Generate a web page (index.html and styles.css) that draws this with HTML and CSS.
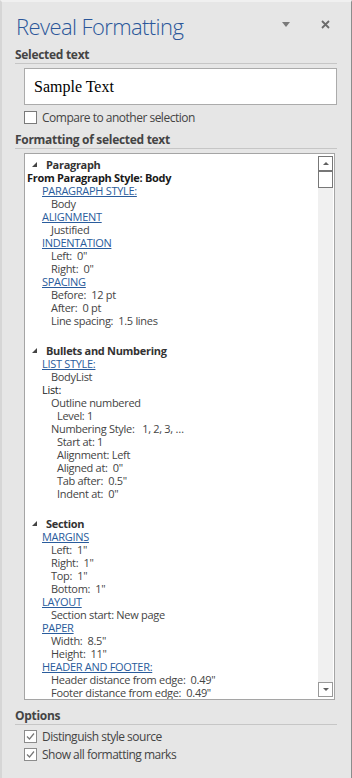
FILE: index.html
```html
<!DOCTYPE html>
<html lang="en">
<head>
  <meta charset="UTF-8" />
  <meta name="viewport" content="width=device-width, initial-scale=1.0"/>
  <title>Reveal Formatting</title>
  <link rel="stylesheet" href="styles.css">
</head>
<body>

  <div class="pane">

    <!-- Title bar -->
    <div class="pane-head">
      <h1>Reveal Formatting</h1>
      <span class="menu-arrow"></span>
      <svg class="close" width="9" height="9" viewBox="0 0 9 9">
        <path d="M1 1 L8 8 M8 1 L1 8" stroke="#6b6b6b" stroke-width="1.8" fill="none"/>
      </svg>
    </div>

    <!-- Selected text -->
    <h2 class="group-title">Selected text</h2>
    <div class="sample">Sample Text</div>
    <div class="check">
      <span class="box"></span>
      <span>Compare to another selection</span>
    </div>

    <!-- Formatting tree -->
    <h2 class="group-title second">Formatting of selected text</h2>
    <div class="tree">
      <div class="tree-body">
        <div class="sec-head"><span class="twisty"></span>Paragraph</div>
        <div class="lvl0 strong">From Paragraph Style: Body</div>
        <a class="lvl1 link">PARAGRAPH STYLE:</a>
        <div class="lvl2">Body</div>
        <a class="lvl1 link">ALIGNMENT</a>
        <div class="lvl2">Justified</div>
        <a class="lvl1 link">INDENTATION</a>
        <div class="lvl2">Left:&nbsp; 0"</div>
        <div class="lvl2">Right:&nbsp; 0"</div>
        <a class="lvl1 link">SPACING</a>
        <div class="lvl2">Before:&nbsp; 12 pt</div>
        <div class="lvl2">After:&nbsp; 0 pt</div>
        <div class="lvl2">Line spacing:&nbsp; 1.5 lines</div>

        <div class="sec-head gap"><span class="twisty"></span>Bullets and Numbering</div>
        <a class="lvl1 link">LIST STYLE:</a>
        <div class="lvl2">BodyList</div>
        <div class="lvl1 plain">List:</div>
        <div class="lvl2">Outline numbered</div>
        <div class="lvl3">Level: 1</div>
        <div class="lvl2">Numbering Style:&nbsp;&nbsp; 1, 2, 3, …</div>
        <div class="lvl3">Start at: 1</div>
        <div class="lvl3">Alignment: Left</div>
        <div class="lvl3">Aligned at:&nbsp; 0"</div>
        <div class="lvl3">Tab after:&nbsp; 0.5"</div>
        <div class="lvl3">Indent at:&nbsp; 0"</div>

        <div class="sec-head gap"><span class="twisty"></span>Section</div>
        <a class="lvl1 link">MARGINS</a>
        <div class="lvl2">Left:&nbsp; 1"</div>
        <div class="lvl2">Right:&nbsp; 1"</div>
        <div class="lvl2">Top:&nbsp; 1"</div>
        <div class="lvl2">Bottom:&nbsp; 1"</div>
        <a class="lvl1 link">LAYOUT</a>
        <div class="lvl2">Section start: New page</div>
        <a class="lvl1 link">PAPER</a>
        <div class="lvl2">Width:&nbsp; 8.5"</div>
        <div class="lvl2">Height:&nbsp; 11"</div>
        <a class="lvl1 link">HEADER AND FOOTER:</a>
        <div class="lvl2">Header distance from edge:&nbsp; 0.49"</div>
        <div class="lvl2">Footer distance from edge:&nbsp; 0.49"</div>
      </div>

      <div class="scrollbar">
        <span class="sb-btn up"></span>
        <span class="sb-thumb"></span>
        <span class="sb-track"></span>
        <span class="sb-btn down"></span>
      </div>
    </div>

    <!-- Options -->
    <h2 class="group-title third">Options</h2>
    <div class="check opt">
      <span class="box checked">
        <svg width="11" height="11" viewBox="0 0 11 11"><path d="M2 5.5 L4.5 8 L9 2.5" stroke="#777" stroke-width="1.2" fill="none"/></svg>
      </span>
      <span>Distinguish style source</span>
    </div>
    <div class="check opt">
      <span class="box checked">
        <svg width="11" height="11" viewBox="0 0 11 11"><path d="M2 5.5 L4.5 8 L9 2.5" stroke="#777" stroke-width="1.2" fill="none"/></svg>
      </span>
      <span>Show all formatting marks</span>
    </div>

  </div>

</body>
</html>
```

FILE: styles.css
```css
* {
  margin: 0;
  padding: 0;
  box-sizing: border-box;
}

body {
  font-family: 'Open Sans', 'Noto Sans', sans-serif;
  background: #e6e6e6;
  color: #444;
  width: 352px;
  height: 778px;
  overflow: hidden;
}

.pane {
  height: 778px;
  border-top: 2px solid #f0f0f0;
  border-left: 2px solid #d6d6d6;
  border-right: 1px solid #8c8c8c;
}

/* Title bar */
.pane-head {
  display: flex;
  align-items: center;
  height: 44px;
  padding: 5px 21px 0 14px;
}

.pane-head h1 {
  flex: 1;
  font-weight: 300;
  font-size: 22px;
  color: #2b579a;
  line-height: 39px;
  letter-spacing: -0.6px;
}

.menu-arrow {
  width: 0;
  height: 0;
  border-left: 4px solid transparent;
  border-right: 4px solid transparent;
  border-top: 5px solid #7a7a7a;
  margin-right: 31px;
  margin-top: -5px;
}

.close {
  margin-top: -5px;
}

/* Group titles */
.group-title {
  font-size: 12px;
  font-weight: 700;
  color: #444;
  line-height: 16px;
  margin: 1px 14px 0 13px;
  border-bottom: 1px solid #c6c6c6;
  letter-spacing: -0.3px;
}

.group-title.second {
  margin-top: 8px;
}

.group-title.third {
  margin-top: 8px;
}

.sample {
  margin: 4px 14px 0 22px;
  height: 37px;
  background: #fff;
  border: 1px solid #ababab;
  font-family: 'Liberation Serif', serif;
  font-size: 16px;
  color: #000;
  padding-left: 9px;
  line-height: 35px;
}

/* Checkboxes */
.check {
  display: flex;
  align-items: center;
  gap: 5px;
  margin: 6px 0 0 22px;
  font-size: 12px;
  color: #444;
  height: 13px;
  letter-spacing: -0.5px;
}

.check .box {
  width: 13px;
  height: 13px;
  border: 1px solid #7a7a7a;
  background: #fff;
  display: flex;
  align-items: center;
  justify-content: center;
}

.check .box.checked {
  border-color: #8c8c8c;
}

.check.opt {
  margin-top: 5px;
}

.check.opt + .check.opt {
  margin-top: 5px;
}

/* Formatting tree */
.tree {
  display: flex;
  margin: 4px 16px 0 22px;
  height: 547px;
  background: #fff;
  border: 1px solid #a5a5a5;
  padding: 2px 1px 2px 0;
}

.tree-body {
  flex: 1;
  overflow: hidden;
  padding: 2px 0 0 2px;
  margin-bottom: -2px;
  font-size: 11px;
  line-height: 13px;
  color: #444;
  letter-spacing: -0.3px;
}

.tree-body > * {
  display: block;
  height: 13px;
  white-space: nowrap;
}

.sec-head {
  font-weight: 700;
  color: #333;
  padding-left: 5px;
  display: flex !important;
  align-items: center;
}

.sec-head.gap {
  margin-top: 17px;
}

.twisty {
  width: 0;
  height: 0;
  border-left: 5px solid transparent;
  border-bottom: 5px solid #444;
  margin-right: 9px;
}

.strong {
  font-weight: 700;
  color: #1a1a1a;
}

.lvl1 {
  padding-left: 15px;
}

.lvl2 {
  padding-left: 24px;
}

.lvl3 {
  padding-left: 30px;
}

.link {
  color: #2a5c9c;
  text-decoration: underline;
}

.plain {
  color: #222;
}

/* Scrollbar */
.scrollbar {
  width: 15px;
  display: flex;
  flex-direction: column;
  background: #f0f0f0;
}

.sb-btn {
  height: 15px;
  border: 1px solid #777;
  background: #fff;
  display: flex;
  align-items: center;
  justify-content: center;
}

.sb-btn::before {
  content: '';
  width: 0;
  height: 0;
  border-left: 3px solid transparent;
  border-right: 3px solid transparent;
}

.sb-btn.up::before {
  border-bottom: 3px solid #606060;
}

.sb-btn.down::before {
  border-top: 3px solid #606060;
}

.sb-btn.down {
  border-color: #999;
}

.sb-thumb {
  height: 17px;
  border: 1px solid #777;
  background: #fff;
}

.sb-track {
  flex: 1;
}
```
